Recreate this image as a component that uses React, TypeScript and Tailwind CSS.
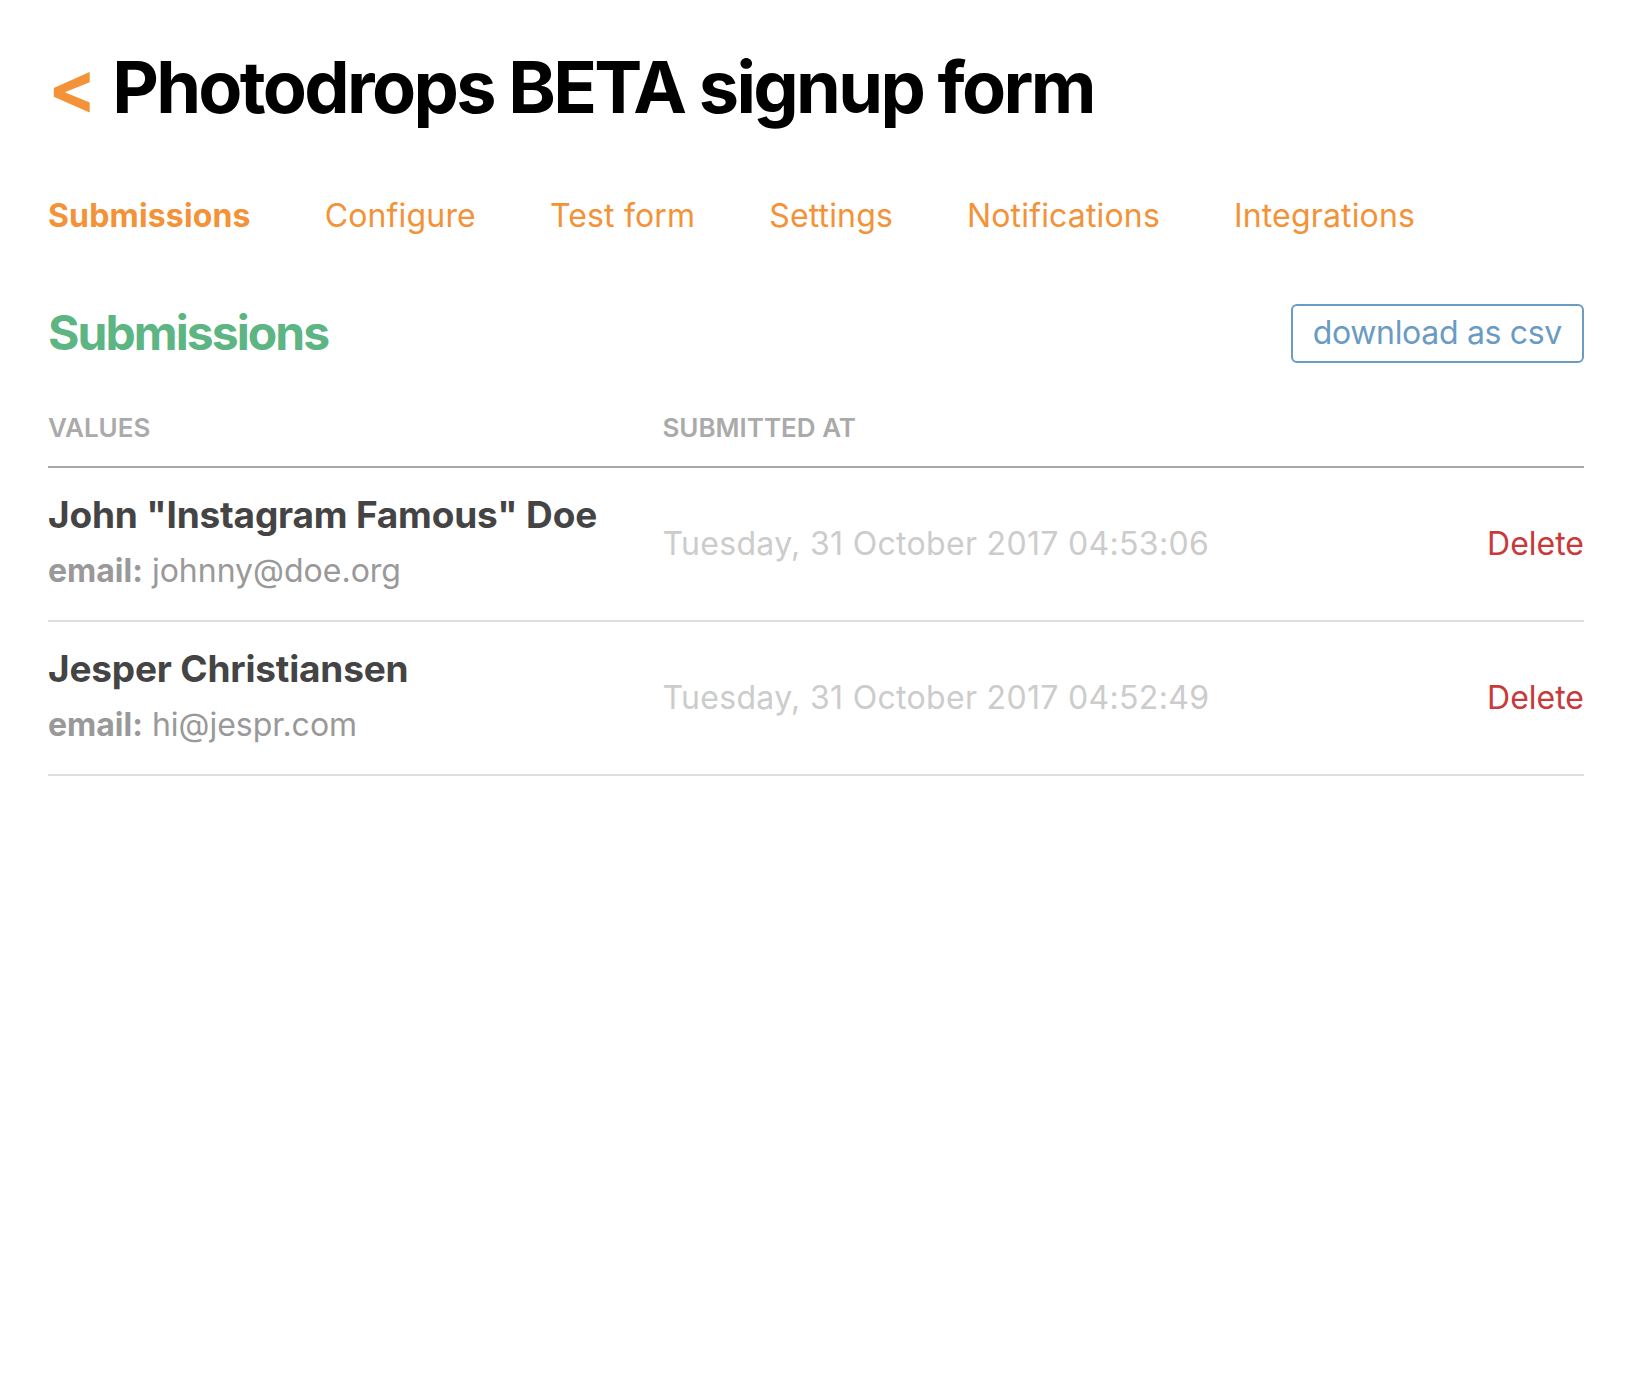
import React from 'react';

const tabs = ['Submissions', 'Configure', 'Test form', 'Settings', 'Notifications', 'Integrations'];

const submissions = [
  { name: 'John "Instagram Famous" Doe', email: 'johnny@doe.org', at: 'Tuesday, 31 October 2017 04:53:06' },
  { name: 'Jesper Christiansen', email: 'hi@jespr.com', at: 'Tuesday, 31 October 2017 04:52:49' },
];

export default function App() {
  return (
    <div className="min-h-screen bg-white px-12 pt-[44px] font-['Inter','Liberation_Sans',sans-serif]">
      <h1 className="text-[72px] leading-[86px] font-bold tracking-[-0.037em] text-black">
        <a href="#" className="text-[#f39237] mr-[18px]">&lt;</a>
        Photodrops BETA signup form
      </h1>

      <nav className="mt-[62px] flex gap-[74px] text-[32px] leading-[48px] text-[#f39237] tracking-[0.005em]">
        {tabs.map((t, i) => (
          <a key={t} href="#" className={i === 0 ? 'font-bold' : ''}>
            {t}
          </a>
        ))}
      </nav>

      <div className="mt-[63px] flex items-center justify-between">
        <h2 className="text-[48px] leading-[60px] font-bold tracking-[-0.04em] text-[#5cb582]">Submissions</h2>
        <button className="h-[59px] rounded-md border-2 border-[#6a9bc3] px-[20px] text-[32px] leading-[40px] text-[#6a9bc3] tracking-[-0.01em]">
          download as csv
        </button>
      </div>

      <div className="mt-[47px] flex border-b-2 border-[#a6a6a6] pb-[20px] text-[26px] leading-[36px] font-semibold uppercase text-[#aaaaaa]">
        <div className="w-[40%]">Values</div>
        <div className="flex-1">Submitted at</div>
      </div>

      {submissions.map((s) => (
        <div key={s.email} className="flex items-center border-b-2 border-[#dddddd]">
          <div className="w-[40%] pt-[20px] pb-[25px]">
            <div className="text-[37px] leading-[54px] font-bold tracking-[-0.005em] text-[#444444]">{s.name}</div>
            <div className="mt-[5px] text-[32px] leading-[48px] text-[#999999]">
              <span className="font-bold">email:</span> {s.email}
            </div>
          </div>
          <div className="flex-1 text-[32px] leading-[48px] text-[#cccccc] tracking-[0.01em]">{s.at}</div>
          <a href="#" className="text-[32px] leading-[48px] text-[#c9393a]">
            Delete
          </a>
        </div>
      ))}
    </div>
  );
}
